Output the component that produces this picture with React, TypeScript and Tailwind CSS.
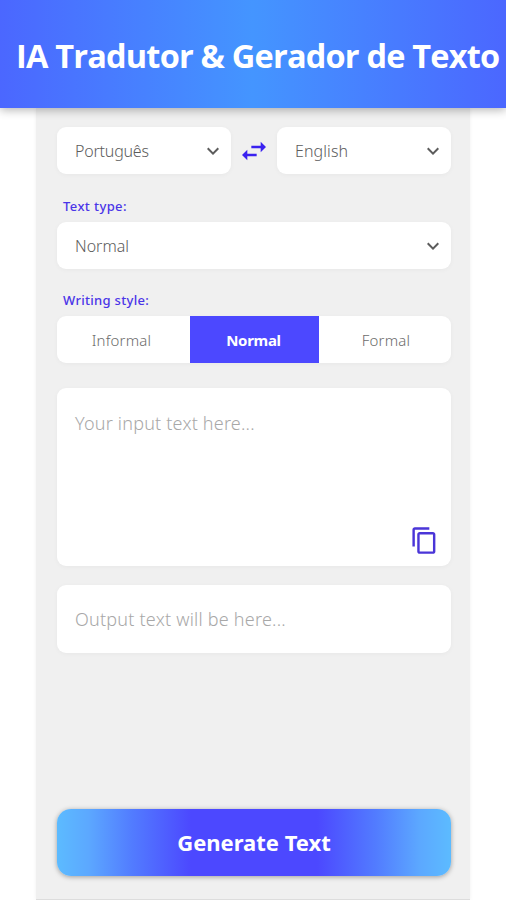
import { useState } from 'react';
import { MdContentCopy, MdKeyboardArrowDown, MdSwapHoriz } from 'react-icons/md';

const STYLES = ['Informal', 'Normal', 'Formal'];

function SelectBox({ value, className = '' }: { value: string; className?: string }) {
  return (
    <button
      className={`flex h-[47px] items-center justify-between rounded-[9px] bg-white pl-[18px] pr-1.5 shadow-[0_1px_5px_rgba(0,0,0,0.04)] ${className}`}
    >
      <span className="text-[16px] font-light text-[#5c5c5c]">{value}</span>
      <MdKeyboardArrowDown className="size-6 text-[#5c5c5c]" />
    </button>
  );
}

export default function App() {
  const [style, setStyle] = useState('Normal');

  return (
    <div className="flex h-[900px] w-[506px] flex-col overflow-hidden bg-white font-['Noto_Sans',sans-serif]">
      <header className="z-10 flex h-[108px] shrink-0 items-center bg-[linear-gradient(90deg,#4b67ff_0%,#4495ff_50%,#4b67ff_100%)] pt-1 pl-4 shadow-[0_2px_9px_rgba(0,0,0,0.3)]">
        <h1 className="whitespace-nowrap font-['Open_Sans',sans-serif] text-[32.5px] font-bold tracking-[-0.8px] text-white">
          IA Tradutor &amp; Gerador de Texto
        </h1>
      </header>

      <main className="ml-9 flex w-[434px] flex-1 flex-col border-b border-[#dddddd] bg-[#f0f0f0] pt-[19px] pr-[19px] pl-[21px] shadow-[0_0_4px_rgba(0,0,0,0.06)]">
        <div className="flex w-[394px] items-center justify-between">
          <SelectBox value="Português" className="w-[174px] tracking-[-0.2px]" />
          <MdSwapHoriz className="size-8 text-[#3a22f0]" />
          <SelectBox value="English" className="w-[174px] tracking-[0.1px]" />
        </div>

        <label className="mt-[23px] pl-1.5 text-[13px] leading-[18px] font-medium tracking-[0.4px] text-[#4a35e8]">
          Text type:
        </label>
        <SelectBox value="Normal" className="mt-[7px] w-[394px]" />

        <label className="mt-[22px] pl-1.5 text-[13px] leading-[18px] font-medium tracking-[0.3px] text-[#4a35e8]">
          Writing style:
        </label>
        <div className="mt-[7px] grid h-[47px] w-[394px] shrink-0 grid-cols-[133px_129px_132px] overflow-hidden rounded-[9px] bg-white shadow-[0_1px_5px_rgba(0,0,0,0.04)]">
          {STYLES.map((item) => (
            <button
              key={item}
              onClick={() => setStyle(item)}
              className={`pt-px text-[15px] first:pr-1 last:pl-0.5 ${
                style === item ? 'bg-[#4c48ff] pr-0.5 font-bold tracking-[-0.3px] text-white' : 'font-light tracking-[0.2px] text-[#6c6c6c]'
              }`}
            >
              {item}
            </button>
          ))}
        </div>

        <div className="mt-[25px] flex h-[178px] w-[394px] shrink-0 flex-col justify-between rounded-[9px] bg-white pt-[21px] pr-3 pb-[11px] pl-[18px] shadow-[0_1px_5px_rgba(0,0,0,0.04)]">
          <p className="text-[18px] leading-7 font-light tracking-[0.2px] text-[#a8a8a8]">Your input text here...</p>
          <MdContentCopy className="size-[29px] self-end text-[#4a35d8]" />
        </div>

        <div className="mt-[19px] flex h-[68px] w-[394px] shrink-0 items-center rounded-[9px] bg-white pl-[18px] shadow-[0_1px_5px_rgba(0,0,0,0.04)]">
          <p className="text-[18px] font-light tracking-[0.22px] text-[#a8a8a8]">Output text will be here...</p>
        </div>

        <button className="mt-auto mb-[23px] h-[67px] w-[394px] shrink-0 rounded-[14px] bg-[linear-gradient(90deg,#5cbbff_0%,#5ca8ff_8%,#527cff_19%,#4c48ff_34%,#4c48ff_66%,#527cff_81%,#5ca8ff_92%,#5cbbff_100%)] text-[22px] font-bold text-white shadow-[0_1px_5px_rgba(0,0,0,0.35)]">
          Generate Text
        </button>
      </main>
    </div>
  );
}
